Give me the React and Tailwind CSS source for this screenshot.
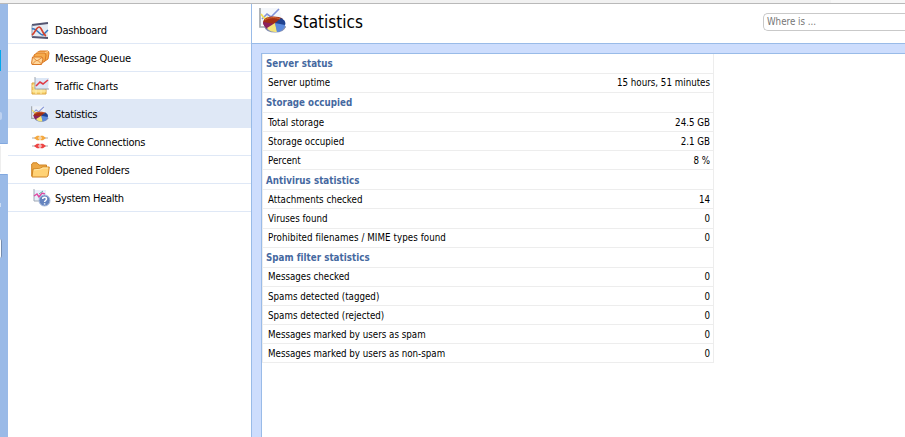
import React from "react";

function StatsIcon({ className }) {
  return (
    <svg className={className} viewBox="0 0 28 26" fill="none">
      <path d="M2 0H20L25 17H2Z" fill="#f0f3f9" opacity=".7" />
      <path d="M1 0V19H6M24 19H27" stroke="#a3a8ad" strokeWidth="1.7" />
      <path d="M3 11L8 6L12 9L20 1" stroke="#8192d8" strokeWidth="1.6" />
      <path d="M2 6L6 11L9 9" stroke="#f2df58" strokeWidth="1.8" />
      <ellipse cx="16" cy="19" rx="10.5" ry="5.5" fill="#8590b3" />
      <path d="M4 14C5 8 18 7 24 11L16 16L8 20C5 18 4 16 4 14Z" fill="#a33013" />
      <path d="M4 14L16 16L8 21C5 18 4 16 4 14Z" fill="#8b205d" />
      <path d="M8 20L16 15L18 24C13 24 10 23 8 20Z" fill="#f4e57a" />
      <path d="M16 15L25 12C28 17 25 23 18 24Z" fill="#5b8add" />
      <path d="M16 15L22 10C26 12 27 15 26 17Z" fill="#20428f" />
      <path d="M6 12C10 9 17 9 21 11" stroke="#d96a36" />
    </svg>
  );
}

function DashboardIcon({ className }) {
  return (
    <svg className={className} viewBox="0 0 18 17" fill="none">
      <path d="M1 2L17 1V15L1 16Z" fill="#e5ebf3" />
      <path d="M1 3L17 1M1 15L17 16" stroke="#555672" strokeWidth="1.8" />
      <path d="M1 3V15" stroke="#8e9cb0" />
      <path d="M1 7C5 5 8 13 12 13L17 8" stroke="#3274bd" strokeWidth="1.5" />
      <path d="M1 13C5 10 5 5 8 5S11 12 15 14" stroke="#d3422f" strokeWidth="1.7" />
    </svg>
  );
}

function QueueIcon({ className }) {
  return (
    <svg className={className} viewBox="0 0 19 16" fill="#f6aa4b" stroke="#d97825" strokeLinejoin="round">
      <path d="M6 2.5L9 1H17L18 3L17 9L14 11H7Z" />
      <path d="M6 2.5H14L17 1.5M14 3L13 10" fill="none" stroke="#ffd393" />
      <path d="M3 5L6 3H14L15 5L14 11L11 13H3Z" />
      <path d="M1.5 7H11L12 9L10.5 14.5H1L.6 13Z" fill="#ffd69a" />
      <path d="M2 7.5L6 11L11 7.5M1.5 14L5 10.5M10.5 14L7 10.5" fill="none" strokeWidth=".8" />
    </svg>
  );
}

function TrafficIcon({ className }) {
  return (
    <svg className={className} viewBox="0 0 19 18" fill="none">
      <path d="M1 6H15V17H1Z" fill="#f9d978" stroke="#dda441" />
      <path d="M1 9H15M1 14H15M5 6V17M10 6V17" stroke="#fff0b5" />
      <path d="M4 1H18L17 12H4Z" fill="#dce7f6" />
      <path d="M4 0V12H18" stroke="#9da5af" />
      <path d="M5 9L9 5L12 7L17 3" stroke="#df3c45" strokeWidth="1.6" />
    </svg>
  );
}

function ConnectionsIcon({ className }) {
  return (
    <svg className={className} viewBox="0 0 18 14">
      <path d="M1 3H17M1 11H17" stroke="#c6c6c8" strokeWidth="1.3" />
      <path d="M3 3L6 .7H8.5V5.3H6ZM15 3L12 .7H9.5V5.3H12Z" fill="#f5a83e" />
      <path d="M3 11L6 8.7H8.5V13.3H6ZM15 11L12 8.7H9.5V13.3H12Z" fill="#ed4443" />
      <path d="M7 3H11M7 11H11" stroke="#fff" strokeWidth=".8" />
    </svg>
  );
}

function FolderIcon({ className }) {
  return (
    <svg className={className} viewBox="0 0 19 16" stroke="#cf8424" strokeLinejoin="round">
      <path d="M.7 14V2L2 .8H6L8 3H15.5V14Z" fill="#eda845" />
      <path d="M1 15L2 7L9 6.5L11 5H18.3L17 14L15.5 15Z" fill="#ffd275" />
      <path d="M3 8L10 7L12 6H17" stroke="#ffe8ad" fill="none" />
    </svg>
  );
}

function HealthIcon({ className }) {
  return (
    <svg className={className} viewBox="0 0 18 18" fill="none">
      <path d="M1 1H13V12H1Z" fill="#e8effb" />
      <path d="M1 0V12H7" stroke="#9fa8b5" />
      <path d="M1 7L4 5L6 8L9 4L12 5" stroke="#de49a1" strokeWidth="1.4" />
      <path d="M6 5L10 2" stroke="#60b4a0" />
      <circle cx="11.5" cy="11.5" r="5.5" fill="#6584bf" stroke="#a9bbdc" />
      <path d="M9.7 10C9.7 7.8 13.5 7.8 13.5 10C13.5 11.5 11.6 11.5 11.6 13M11.6 14.2V15.5" stroke="#fff" strokeWidth="1.5" />
    </svg>
  );
}

const navigation = [
  ["Dashboard", DashboardIcon, "h-[17px] w-[18px]", "tracking-[-0.2px]"],
  ["Message Queue", QueueIcon, "h-4 w-[19px]", "tracking-[-0.25px]"],
  ["Traffic Charts", TrafficIcon, "h-[18px] w-[19px]", "tracking-[-0.15px]"],
  ["Statistics", StatsIcon, "h-[17px] w-[18px]", "tracking-[-0.31px]"],
  ["Active Connections", ConnectionsIcon, "h-[14px] w-[18px]", "tracking-[-0.26px]"],
  ["Opened Folders", FolderIcon, "h-4 w-[19px]", "tracking-[-0.23px]"],
  ["System Health", HealthIcon, "h-[18px] w-[18px] ml-0.5", "tracking-[-0.29px]"],
];

const rows = [
  ["Server status", null, "h-5"],
  ["Server uptime", "15 hours, 51 minutes", "h-[19px]"],
  ["Storage occupied", null, "h-5"],
  ["Total storage", "24.5 GB", "h-[19px] pt-px"],
  ["Storage occupied", "2.1 GB", "h-[19px] pt-px"],
  ["Percent", "8 %", "h-[19px] pt-px"],
  ["Antivirus statistics", null, "h-5 pt-0.5"],
  ["Attachments checked", "14", "h-[19px] pt-px"],
  ["Viruses found", "0", "h-5 pt-px"],
  ["Prohibited filenames / MIME types found", "0", "h-[19px] tracking-[0.065px]"],
  ["Spam filter statistics", null, "h-5"],
  ["Messages checked", "0", "h-[19px]"],
  ["Spams detected (tagged)", "0", "h-[19px] pt-px"],
  ["Spams detected (rejected)", "0", "h-[19px] pt-px"],
  ["Messages marked by users as spam", "0", "h-[19px] pt-px"],
  ["Messages marked by users as non-spam", "0", "h-[19px] pt-px"],
];

function Rail() {
  return (
    <div className="flex w-2 shrink-0 flex-col bg-[#9abae7]">
      <div className="mt-[46px] h-[21px] w-px bg-[#00a8ec]" />
      <div className="mt-[41px] h-2 w-0.5 rounded-r bg-[#bdd1f0]" />
      <div className="mt-[23px] h-px w-[7px] bg-[#82a8df]" />
      <div className="flex h-[30px] items-center bg-white">
        <div className="h-[26px] w-px bg-[#eeeeee]" />
      </div>
      <div className="h-px w-[7px] bg-[#82a8df]" />
      <div className="mt-[28px] h-1 w-px bg-[#cbdcf3]" />
      <div className="mt-[32px] h-[19px] w-0.5 rounded-r-sm border-r border-[#748cae] bg-white" />
    </div>
  );
}

export default function App() {
  return (
    <div className="flex h-[437px] w-[905px] flex-col overflow-hidden bg-white font-['DejaVu_Sans_Condensed','DejaVu_Sans',sans-serif] text-black">
      <div className="flex h-1 shrink-0 border-b border-[#b9b9b9] bg-[#f7f7f7]">
        <div className="w-[831px] bg-[#f1f1f1]" />
      </div>
      <div className="flex min-h-0 flex-1">
        <Rail />
        <nav className="w-[243px] shrink-0 pt-3">
          {navigation.map(([label, Icon, size, tracking]) => (
            <div
              key={label}
              className={`flex h-7 items-center border-b border-[#dfe8f6] pl-[23px] ${label === "Statistics" ? "bg-[#dfe8f6]" : ""}`}
            >
              <div className="flex w-6 shrink-0 items-center pt-px">
                <Icon className={size} />
              </div>
              <span className={`whitespace-nowrap pt-0.5 text-[11px] leading-[14px] ${tracking}`}>{label}</span>
            </div>
          ))}
        </nav>
        <main className="flex min-w-0 flex-1 flex-col border-l border-[#99bbe8]">
          <header className="flex h-10 shrink-0 items-start border-b border-[#99bbe8] pl-[7px]">
            <StatsIcon className="mt-1 h-[26px] w-7 shrink-0" />
            <h1 className="ml-1.5 mt-[7px] whitespace-nowrap text-[17px] leading-[22px]">Statistics</h1>
            <div className="ml-auto mt-[9px] flex h-[18px] w-[142px] shrink-0 items-center rounded-l-[5px] border border-r-0 border-[#c9c9c9] pl-[3px] pt-px text-[9.7px] text-[#757575]">
              Where is ...
            </div>
          </header>
          <div className="min-h-0 flex-1 bg-[#cdddfd] pl-[9px] pt-[9px]">
            <div className="h-full border-l border-t border-[#99bbe8] bg-white">
              <div className="w-[452px] border-x border-[#ededed]">
                {rows.map(([label, value, size], i) => (
                  <div key={i} className={`flex items-center justify-between whitespace-nowrap border-b border-[#ededed] text-[9.7px] leading-[14px] ${size}`}>
                    {value === null ? (
                      <h2 className="pl-[3px] font-bold tracking-[0.04px] text-[#4568a0]">{label}</h2>
                    ) : (
                      <>
                        <span className="pl-[5px]">{label}</span>
                        <span className="pr-[3px]">{value}</span>
                      </>
                    )}
                  </div>
                ))}
              </div>
            </div>
          </div>
        </main>
      </div>
    </div>
  );
}
